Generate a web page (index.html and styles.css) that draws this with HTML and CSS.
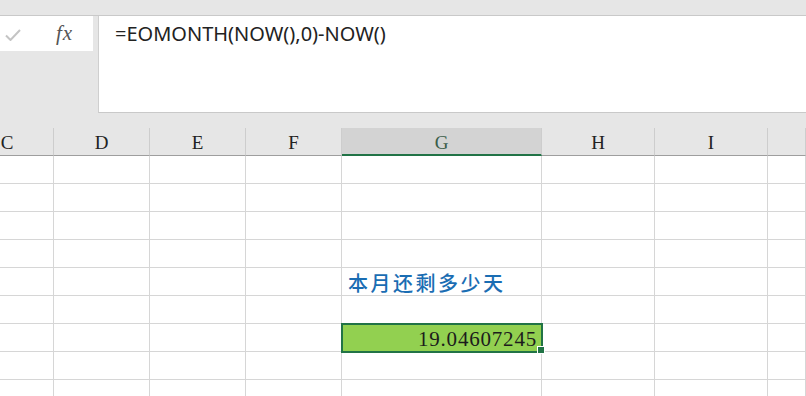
FILE: index.html
```html
<!DOCTYPE html>
<html lang="zh-CN">
<head>
    <meta charset="UTF-8">
    <title>EOMONTH</title>
    <link rel="stylesheet" href="styles.css">
</head>
<body>
    <div class="top-strip"></div>

    <div class="formula-bar">
        <div class="name-box">
            <svg class="check" width="16" height="12" viewBox="0 0 16 12">
                <path d="M1 6.5 L5.5 11 L15 1" fill="none" stroke="#c4c4c4" stroke-width="2"/>
            </svg>
            <span class="fx">fx</span>
        </div>
        <div class="formula-input">=EOMONTH(NOW(),0)-NOW()</div>
    </div>

    <div class="sheet">
        <div class="head">C</div>
        <div class="head">D</div>
        <div class="head">E</div>
        <div class="head">F</div>
        <div class="head head-active">G</div>
        <div class="head">H</div>
        <div class="head">I</div>
        <div class="head"></div>
    </div>

    <div class="sheet" id="grid"></div>

    <script>
        // 9 filas visibles, columnas C..J
        const grid = document.getElementById('grid');
        for (let r = 0; r < 9; r++) {
            for (let c = 0; c < 8; c++) {
                const cell = document.createElement('div');
                cell.className = 'cell';
                if (c === 4 && r === 4) {
                    cell.classList.add('cell-label');
                    cell.textContent = '本月还剩多少天';
                }
                if (c === 4 && r === 6) {
                    cell.classList.add('cell-selected');
                    cell.textContent = '19.04607245';
                }
                grid.appendChild(cell);
            }
        }
    </script>
</body>
</html>
```

FILE: styles.css
```css
body {
    margin: 0;
    background: #e6e6e6;
    font-family: "Liberation Serif", serif;
    overflow: hidden;
}
.top-strip {
    height: 15px;
    border-bottom: 1px solid #c9c9c9;
}
.formula-bar {
    display: flex;
    gap: 5px;
    height: 97px;
    margin-bottom: 15px;
}
.name-box {
    width: 93px;
    height: 35px;
    background: #fff;
    display: flex;
    align-items: center;
}
.check {
    margin-left: 5px;
    margin-top: 2px;
}
.fx {
    margin-left: 35px;
    font-style: italic;
    font-size: 21px;
    color: #555;
    letter-spacing: 1px;
}
.formula-input {
    flex: 1;
    background: #fff;
    border-left: 1px solid #cfcfcf;
    border-bottom: 1px solid #c9c9c9;
    padding: 5px 0 0 16px;
    font-family: "Noto Sans", sans-serif;
    font-size: 20px;
    color: #222;
    line-height: 26px;
}
.sheet {
    display: grid;
    grid-template-columns: 93px 96px 96px 96px 200px 113px 113px 38px;
    margin-left: -39px;
}
.head {
    height: 28px;
    box-sizing: border-box;
    border-right: 1px solid #cdcdcd;
    border-bottom: 1px solid #9e9e9e;
    padding-top: 3px;
    text-align: center;
    font-size: 19px;
    line-height: 24px;
    color: #222;
}
.head-active {
    background: #d3d3d3;
    border-bottom: 2px solid #217346;
    color: #3b5e4a;
}
.cell {
    height: 28px;
    box-sizing: border-box;
    background: #fff;
    border-right: 1px solid #d6d6d6;
    border-bottom: 1px solid #d6d6d6;
}
.cell-label {
    padding: 2px 0 0 6px;
    font-family: "Noto Sans CJK SC", sans-serif;
    font-size: 20px;
    font-weight: 500;
    line-height: 26px;
    letter-spacing: 2.5px;
    color: #1a6db3;
    white-space: nowrap;
}
.cell-selected {
    position: relative;
    background: #92d050;
    outline: 2px solid #217346;
    outline-offset: -1px;
    text-align: right;
    padding-right: 4px;
    font-size: 21px;
    line-height: 30px;
    letter-spacing: 0.8px;
    color: #1c1c1c;
}
.cell-selected::after {
    content: "";
    position: absolute;
    right: -4px;
    bottom: -3px;
    width: 6px;
    height: 6px;
    background: #217346;
    border: 1px solid #fff;
}
```
